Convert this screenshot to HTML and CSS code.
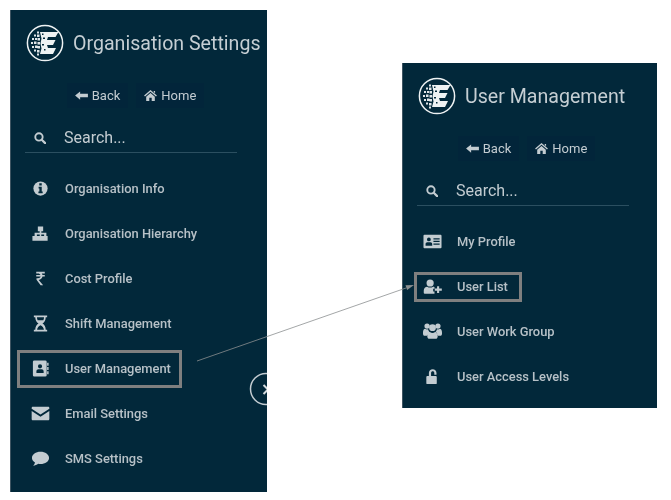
FILE: index.html
```html
<!DOCTYPE html>
<html lang="en">
<head>
    <meta charset="UTF-8">
    <meta name="viewport" content="width=device-width, initial-scale=1.0">
    <title>Organisation Settings - User Management</title>
    <link rel="stylesheet" href="styles.css">
</head>
<body>
    <svg class="defs" width="0" height="0">
        <symbol id="logo" viewBox="0 0 38 38">
            <circle cx="19" cy="19" r="17.600" fill="none" stroke="#eef2f3" stroke-width="1.500"/>
            <path fill="#eef2f3" d="M14 8h18.500l-3 5H22l-1 3h8.500l-2.500 5H21l1 3h8l-3 6H14l1.500-5.500-1-5 1-5z"/>
            <path fill="#dfe5e8" d="M11 7.500h2v2h-2zM8 10.500h2v2H8zM11 10.500h2.500V13H11zM6 14h2v2H6zM9 14h2v2H9zM11.500 14H14v2.500h-2.500zM5 18h2v2H5zM8 17.500h2.500V20H8zM11.500 18H14v2.500h-2.500zM6 22h2v2H6zM9 21.500h2.500V24H9zM11.500 22H14v2.500h-2.500zM8 25.500h2v2H8zM11 26h2.500v2.500H11zM11 29.500h2v2h-2z"/>
            <path fill="#02283a" d="M17 13.500h2v1.500h-2zM16 20h2v1.500h-2zM18 25h1.500v1.500H18zM16 9.500h1.500V11H16z"/>
        </symbol>
    </svg>

    <section class="panel panel-org">
        <div class="panel-head">
            <svg class="logo"><use href="#logo"/></svg>
            <span class="panel-title">Organisation Settings</span>
        </div>
        <div class="panel-btns">
            <a class="btn"><svg class="btn-icon" viewBox="0 0 14 12"><path d="M0 6l5.500-4.500V4H14v4H5.500v2.500z"/></svg>Back</a>
            <a class="btn"><svg class="btn-icon" viewBox="0 0 14 12"><path d="M7 0l7 6-1 1.100L7 2 1 7.100 0 6zM2.300 7.300L7 3.300l4.700 4V12H8.300V8.500H5.700V12H2.300zM10.500 1H12v2.500l-1.500-1.300z"/></svg>Home</a>
        </div>
        <div class="search">
            <svg class="search-icon" viewBox="0 0 14 14"><circle cx="5.800" cy="5.800" r="4.300" fill="none" stroke="#c3ccd1" stroke-width="2.200"/><path d="M9 9l4 4" stroke="#c3ccd1" stroke-width="2.600" stroke-linecap="round"/></svg>
            <span>Search...</span>
        </div>
        <ul class="menu">
            <li class="menu-item">
                <svg class="menu-icon" viewBox="0 0 20 20"><circle cx="10" cy="10" r="7.500"/><path fill="#02283a" d="M8.700 4.600h2.600v2.300H8.700zM8 8.200h3.300v5h1v1.800H7.800v-1.800h1v-3.200H8z"/></svg>
                Organisation Info
            </li>
            <li class="menu-item">
                <svg class="menu-icon" viewBox="0 0 20 20"><path d="M7.200 2.500h5.600v5h-1.900v1.700h5.300V12.500h1.300v5h-5.500v-5h1.800v-1.500h-3v1.500h1.800v5H7.400v-5h1.800v-1.500h-3v1.500H8v5H1.500v-5h2.300V9.200h5.300V7.500H7.200z"/></svg>
                Organisation Hierarchy
            </li>
            <li class="menu-item">
                <svg class="menu-icon" viewBox="0 0 20 20"><path d="M5.500 3h9v1.700h-3.200c.4.500.7 1 .8 1.600h2.400V8h-2.400c-.4 2-1.900 3.200-4 3.500l4.700 5.500h-2.700L5.800 11.300V9.800h1.500c1.500 0 2.500-.6 2.800-1.800H5.500V6.300h4.500c-.4-1-1.300-1.600-2.700-1.600H5.500z"/></svg>
                Cost Profile
            </li>
            <li class="menu-item">
                <svg class="menu-icon" viewBox="0 0 20 20"><path fill-rule="evenodd" d="M3 1.500h14v2h-1.500c0 3-1.300 5.300-3.400 6.500 2.100 1.200 3.400 3.500 3.400 6.500H17v2H3v-2h1.500c0-3 1.300-5.300 3.400-6.500C5.800 8.800 4.500 6.500 4.500 3.500H3zM6.300 3.500c0 1.200.2 2.200.7 3h6c.5-.8.700-1.800.7-3zM6.400 16.500h7.200c-.3-2.200-1.700-3.800-3.600-4.700-1.900.9-3.300 2.500-3.600 4.700z"/></svg>
                Shift Management
            </li>
            <li class="menu-item is-boxed boxed-user">
                <svg class="menu-icon" viewBox="0 0 20 20"><path fill-rule="evenodd" d="M3.500 1.500H15a1.500 1.500 0 0 1 1.500 1.500v14a1.500 1.500 0 0 1-1.500 1.500H3.500A1.500 1.500 0 0 1 2 17V3a1.500 1.500 0 0 1 1.500-1.500zM9.500 5.500a2.200 2.200 0 1 0 0 4.400 2.200 2.200 0 0 0 0-4.400zM5.700 14.800h7.600v-1.900c0-1.100-1-2.100-2.100-2.100H7.800c-1.100 0-2.100 1-2.100 2.100z"/><path d="M17 4h1.500v3H17zM17 8.500h1.500v3H17zM17 13h1.500v3H17z"/></svg>
                User Management
            </li>
            <li class="menu-item">
                <svg class="menu-icon" viewBox="0 0 20 20"><path d="M2 2.800h16c.8 0 1.300.5 1.300 1.300v.8L10 11 .7 4.900v-.8c0-.8.5-1.300 1.300-1.300zM.7 7.400L10 13.500l9.300-6.100v8.500c0 .8-.5 1.300-1.300 1.300H2c-.8 0-1.300-.5-1.300-1.300z"/></svg>
                Email Settings
            </li>
            <li class="menu-item">
                <svg class="menu-icon" viewBox="0 0 20 20"><path d="M10 3c5 0 9 2.900 9 6.400s-4 6.400-9 6.400c-.8 0-1.600-.1-2.400-.2C6.200 16.900 4.200 17.500 2.300 17.500c1-.9 1.700-2 1.900-3.300C2.200 13 1 11.300 1 9.400 1 5.900 5 3 10 3z"/></svg>
                SMS Settings
            </li>
        </ul>
        <svg class="collapse-toggle" viewBox="0 0 34 34"><circle cx="17" cy="17" r="15.500" fill="#02283a" stroke="#c3ccd1" stroke-width="1.500"/><path d="M14.500 13l4.500 4.500-4.500 4.500" fill="none" stroke="#d5dbde" stroke-width="2"/></svg>
    </section>

    <section class="panel panel-user">
        <div class="panel-head">
            <svg class="logo"><use href="#logo"/></svg>
            <span class="panel-title">User Management</span>
        </div>
        <div class="panel-btns">
            <a class="btn"><svg class="btn-icon" viewBox="0 0 14 12"><path d="M0 6l5.500-4.500V4H14v4H5.500v2.500z"/></svg>Back</a>
            <a class="btn"><svg class="btn-icon" viewBox="0 0 14 12"><path d="M7 0l7 6-1 1.100L7 2 1 7.100 0 6zM2.300 7.300L7 3.300l4.700 4V12H8.300V8.500H5.700V12H2.300zM10.500 1H12v2.500l-1.500-1.300z"/></svg>Home</a>
        </div>
        <div class="search">
            <svg class="search-icon" viewBox="0 0 14 14"><circle cx="5.800" cy="5.800" r="4.300" fill="none" stroke="#c3ccd1" stroke-width="2.200"/><path d="M9 9l4 4" stroke="#c3ccd1" stroke-width="2.600" stroke-linecap="round"/></svg>
            <span>Search...</span>
        </div>
        <ul class="menu">
            <li class="menu-item">
                <svg class="menu-icon" viewBox="0 0 20 20"><path fill-rule="evenodd" d="M1.500 3h17c.6 0 1 .4 1 1v12c0 .6-.4 1-1 1h-17c-.6 0-1-.4-1-1V4c0-.6.4-1 1-1zM6.200 5.800a2 2 0 1 0 0 4 2 2 0 0 0 0-4zM2.700 14.600h7v-1.800c0-1-.8-1.900-1.800-1.900H4.500c-1 0-1.800.9-1.800 1.900zM11 6.500v1.300h6.500V6.500zM11 9.300v1.300h6.500V9.300zM11 12.100v1.300h6.500v-1.300z"/></svg>
                My Profile
            </li>
            <li class="menu-item is-boxed boxed-list">
                <svg class="menu-icon" viewBox="0 0 20 20"><circle cx="7.500" cy="6.300" r="3.800"/><path d="M.8 16.500v-2.300c0-2.500 1.700-4 3.700-4 .8.600 1.800.9 3 .9s2.200-.3 3-.9c.6 0 1.100.1 1.600.4v1.700h-1.400v3h1.400v2.400H2.300c-.9 0-1.500-.6-1.500-1.200zM14.800 9.800h2.200v2.400h2.800v2.200H17v2.400h-2.200v-2.400h-2.400v-2.200h2.400z"/></svg>
                User List
            </li>
            <li class="menu-item">
                <svg class="menu-icon" viewBox="0 0 20 20"><circle cx="4.300" cy="4.300" r="2.800"/><circle cx="15.700" cy="4.300" r="2.800"/><circle cx="10" cy="6" r="3.600"/><path d="M0 11c0-2.500 1-4 2.300-4 .7.500 1.300.8 2 .8.300 0 .7 0 1-.1.200 1.200.8 2.300 1.700 3-1.500.6-2.500 2-2.800 3.800H1.800C.7 14.500 0 13.500 0 12.300zM20 11c0-2.500-1-4-2.300-4-.7.500-1.300.8-2 .8-.3 0-.7 0-1-.1-.2 1.200-.8 2.300-1.700 3 1.500.6 2.500 2 2.800 3.800h2.400c1.100 0 1.800-1 1.800-2.200zM7.300 10.500c.8.600 1.700 1 2.700 1s1.900-.4 2.700-1c1.700 0 2.800 1.900 2.800 4.400 0 1.700-1 2.800-2.300 2.800H6.800c-1.300 0-2.300-1.100-2.300-2.800 0-2.500 1.100-4.400 2.800-4.400z"/></svg>
                User Work Group
            </li>
            <li class="menu-item">
                <svg class="menu-icon" viewBox="0 0 20 20"><path d="M4.500 9.500h1.700V6.300C6.200 4 8 2.300 10.200 2.300s4 1.700 4 4v1.800h-2.300V6.300c0-1-.8-1.700-1.700-1.700s-1.700.7-1.700 1.700v3.200h5c.6 0 1 .4 1 1V17c0 .6-.4 1-1 1H4.500c-.6 0-1-.4-1-1v-6.500c0-.6.4-1 1-1z"/></svg>
                User Access Levels
            </li>
        </ul>
    </section>

    <svg class="connector" width="671" height="500">
        <line x1="197" y1="361" x2="406" y2="288" stroke="#8b8f91" stroke-width="0.8"/>
        <path d="M414 285l-8.500.2 1.600 4.800z" fill="#8b8f91"/>
    </svg>
</body>
</html>
```

FILE: styles.css
```css
body {
    margin: 0;
    background: #fff;
    font-family: Roboto, "Liberation Sans", sans-serif;
    color: #c3ccd1;
    width: 671px;
    height: 500px;
    position: relative;
    overflow: hidden;
}
.defs {
    position: absolute;
}
.panel {
    position: absolute;
    background: #02283a;
    overflow: hidden;
    box-sizing: border-box;
    border-left: 1px solid #3f5562;
}
/* the source picture is a soft, scaled-up capture */
.panel > * {
    filter: blur(0.35px);
}
.panel-org {
    left: 10px;
    top: 10px;
    width: 257px;
    height: 482px;
}
.panel-user {
    left: 402px;
    top: 63px;
    width: 255px;
    height: 345px;
}
.panel-head {
    display: flex;
    align-items: center;
    gap: 9px;
    padding: 14px 0 0 15px;
    height: 38px;
}
.logo {
    width: 38px;
    height: 38px;
    flex: none;
}
.panel-title {
    font-size: 19.6px;
    white-space: nowrap;
    color: #c5ced3;
}
.panel-btns {
    display: flex;
    justify-content: center;
    gap: 8px;
    margin-top: 21px;
    padding-right: 7px;
}
.btn {
    display: flex;
    align-items: center;
    gap: 4px;
    height: 25px;
    padding: 0 8px;
    font-size: 13px;
    background: #02253a;
    color: #c3ccd1;
}
.btn-icon {
    width: 13px;
    height: 11px;
    fill: #c3ccd1;
}
.search {
    display: flex;
    align-items: center;
    margin: 17px 0 0 14px;
    width: 212px;
    height: 25px;
    padding-bottom: 2px;
    border-bottom: 1px solid #2b4f60;
    font-size: 16px;
}
.search-icon {
    width: 12px;
    height: 12px;
    margin: 0 18px 0 9px;
}
.menu {
    list-style: none;
    margin: 13px 0 0;
    padding: 0;
}
.menu-item {
    display: flex;
    align-items: center;
    height: 45px;
    padding-left: 20px;
    font-size: 12.9px;
    font-weight: 500;
    color: #b7c1c7;
    position: relative;
}
.menu-icon {
    width: 19px;
    height: 19px;
    fill: #c3ccd1;
    margin-right: 15px;
    flex: none;
}
.is-boxed::after {
    content: "";
    position: absolute;
    border: 3px solid #7f7f7f;
    box-sizing: border-box;
    top: 50%;
    left: 6px;
}
.boxed-user::after {
    width: 165px;
    height: 38px;
    margin-top: -19px;
}
.boxed-list::after {
    left: 11px;
    width: 108px;
    height: 30px;
    margin-top: -15px;
}
.collapse-toggle {
    position: absolute;
    left: 238px;
    top: 362px;
    width: 34px;
    height: 34px;
}
.connector {
    position: absolute;
    left: 0;
    top: 0;
    pointer-events: none;
}
```
